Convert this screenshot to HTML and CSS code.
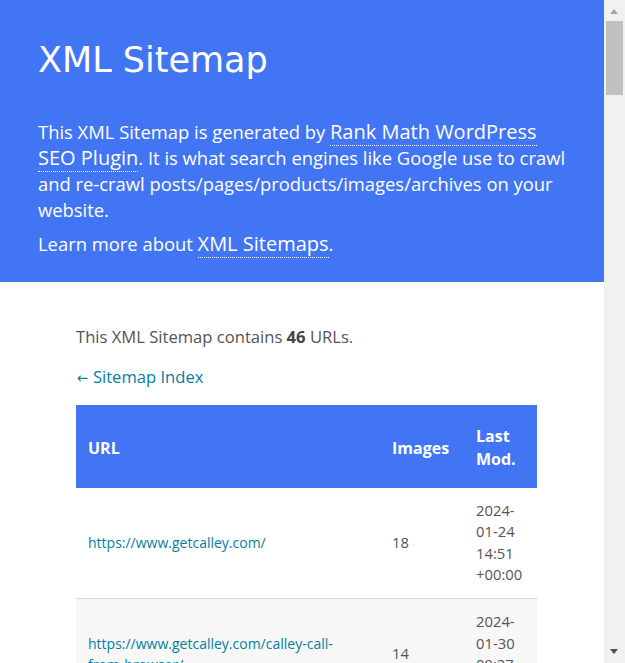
FILE: index.html
```html
<!DOCTYPE html>
<html lang="en">
<head>
<meta charset="utf-8">
<title>XML Sitemap</title>
<link rel="stylesheet" href="styles.css">
</head>
<body>
<div class="page">
  <header class="sitemap-header">
    <h1 class="title">XML Sitemap</h1>
    <p class="intro">This XML Sitemap is generated by <a class="hlink" href="#">Rank Math WordPress SEO Plugin</a>. It is what search engines like Google use to crawl and re-crawl posts/pages/products/images/archives on your website.</p>
    <p class="intro">Learn more about <a class="hlink" href="#">XML Sitemaps</a>.</p>
  </header>
  <main class="content">
    <p class="expl">This XML Sitemap contains <strong>46</strong> URLs.</p>
    <p class="expl"><a class="link" href="#"><span class="arrow">&larr;</span> Sitemap Index</a></p>
    <table class="sitemap">
      <colgroup>
        <col class="c-url">
        <col class="c-img">
        <col class="c-mod">
      </colgroup>
      <thead>
        <tr><th>URL</th><th>Images</th><th>Last Mod.</th></tr>
      </thead>
      <tbody>
        <tr><td><a class="link" href="#">https://www.getcalley.com/</a></td><td class="num">18</td><td class="num">2024-01-24 14:51 +00:00</td></tr>
        <tr><td><a class="link" href="#">https://www.getcalley.com/calley-call-from-browser/</a></td><td class="num">14</td><td class="num">2024-01-30 09:27 +00:00</td></tr>
        <tr><td><a class="link" href="#">https://www.getcalley.com/pricing/</a></td><td class="num">6</td><td class="num">2024-01-22 11:05 +00:00</td></tr>
        <tr><td><a class="link" href="#">https://www.getcalley.com/features/</a></td><td class="num">9</td><td class="num">2024-01-19 08:40 +00:00</td></tr>
      </tbody>
    </table>
  </main>
</div>
<div class="scrollbar" aria-hidden="true">
  <span class="sb-up"></span>
  <span class="sb-thumb"></span>
  <span class="sb-down"></span>
</div>
</body>
</html>
```

FILE: styles.css
```css
html, body {
  margin: 0;
  padding: 0;
  overflow: hidden;
  background: #fff;
}
body {
  font-family: "Open Sans", "Noto Sans", sans-serif;
  font-size: 16px;
  color: #545454;
}
.page {
  width: 604px;
}
.sitemap-header {
  background: #4275f4;
  color: #fff;
  padding: 40px 38px 25px;
}
.title {
  margin: 0 0 39px;
  font-family: "DejaVu Sans", sans-serif;
  font-weight: normal;
  font-size: 35px;
  line-height: 40px;
}
.intro {
  margin: 0 0 8px;
  font-size: 18.4px;
  line-height: 26px;
}
.intro:last-child {
  margin-bottom: 0;
}
.hlink {
  color: #fff;
  text-decoration: none;
  font-size: 20px;
  border-bottom: 1px dotted #fff;
}
.content {
  padding: 43px 0 0 76px;
}
.expl {
  margin: 0 0 16px;
  font-size: 16.6px;
  line-height: 24px;
  height: 24px;
}
.expl strong {
  color: #444;
}
.arrow {
  display: inline-block;
  font-family: "DejaVu Sans", sans-serif;
  font-size: 15px;
  line-height: 16px;
  transform: scaleX(0.9);
}
.link {
  color: #05809e;
  text-decoration: none;
}
.sitemap {
  border-collapse: collapse;
  table-layout: fixed;
  width: 461px;
}
.c-url { width: 304px; }
.c-img { width: 84px; }
.c-mod { width: 73px; }
.sitemap th {
  background: #4275f4;
  color: #fff;
  text-align: left;
  font-weight: bold;
  font-size: 16px;
  line-height: 23.3px;
  padding: 20px 12px 16px;
}
.sitemap td {
  font-size: 14px;
  line-height: 21.6px;
  padding: 12px;
  border-bottom: 1px solid #ddd;
  vertical-align: middle;
}
.sitemap td.num {
  font-size: 14.8px;
}
.sitemap tbody tr:nth-child(even) td {
  background: #f7f7f7;
}
.scrollbar {
  position: fixed;
  top: 0;
  right: 0;
  width: 21px;
  height: 100%;
  background: #f1f1f1;
}
.sb-up {
  position: absolute;
  top: 9px;
  left: 6px;
  width: 0;
  height: 0;
  border-left: 4.5px solid transparent;
  border-right: 4.5px solid transparent;
  border-bottom: 5px solid #a3a3a3;
}
.sb-thumb {
  position: absolute;
  top: 21px;
  left: 2px;
  width: 17px;
  height: 74px;
  background: #c1c1c1;
}
.sb-down {
  position: absolute;
  bottom: 9px;
  left: 6px;
  width: 0;
  height: 0;
  border-left: 4.5px solid transparent;
  border-right: 4.5px solid transparent;
  border-top: 5px solid #505050;
}
```
